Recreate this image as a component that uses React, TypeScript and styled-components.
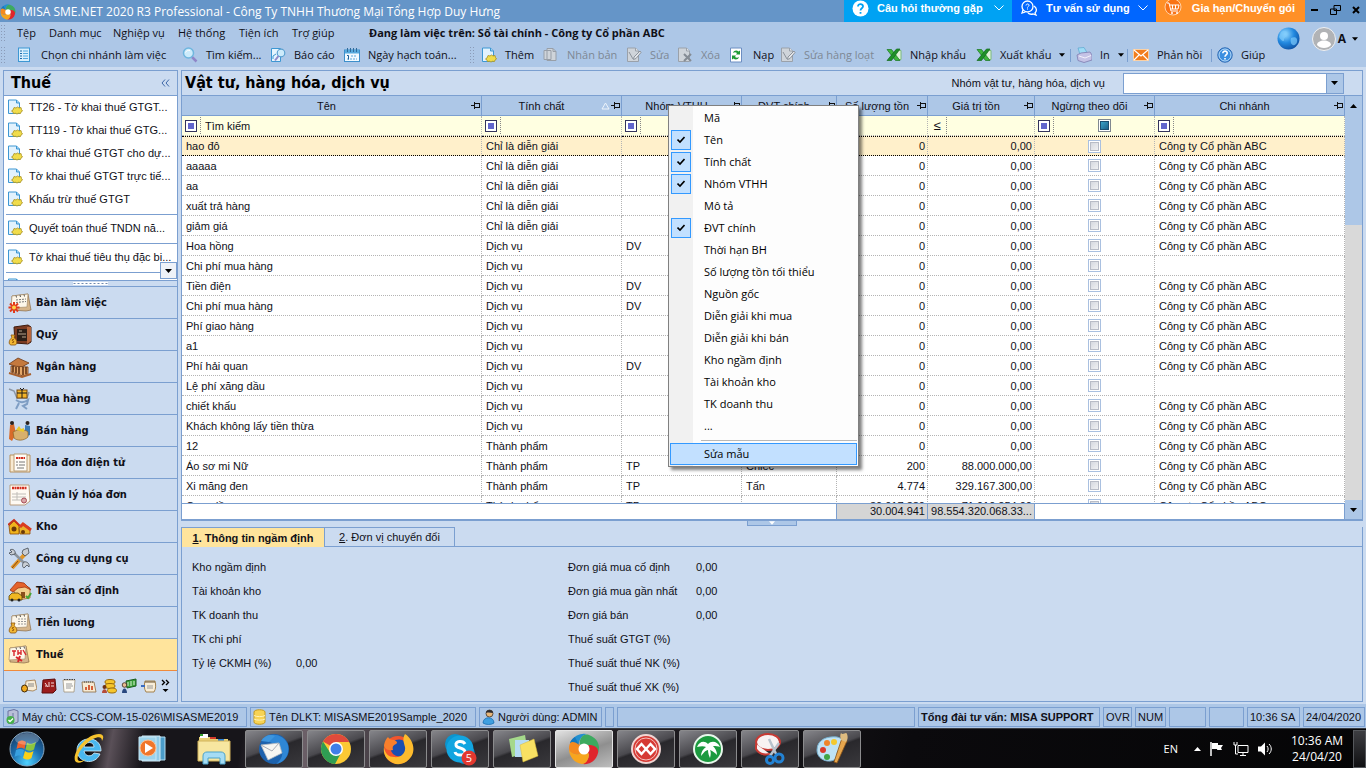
import React from "react";
import styled, { createGlobalStyle, css } from "styled-components";

const c = {
  title: "#6595c8",
  bar: "#adc7e7",
  panel: "#cbdbf0",
  line: "#7b9fd0",
  dot: "#b4b4b4",
  filter: "#ffffe1",
  selected: "#fff0cb",
  active: "#ffe49c",
  ink: "#101018",
};

const uiFont = `"Open Sans", "Noto Sans", sans-serif`;
const gridFont = `"Liberation Sans", Arial, sans-serif`;
const boldFont = `"DejaVu Sans Condensed", "DejaVu Sans", sans-serif`;

const GlobalStyle = createGlobalStyle`
  * { box-sizing: border-box; }
  body { margin: 0; background: ${c.bar}; color: ${c.ink}; font: 11px/16px ${gridFont}; }
  button, input, select { font: inherit; color: inherit; margin: 0; padding: 0; border: 0; background: none; border-radius: 0; }
  h1, h2, dl, dd, dt { margin: 0; }
  a { color: inherit; text-decoration: none; }
  svg { display: block; flex: none; }
`;

/* ---------- shell ---------- */

const Window = styled.div`
  position: relative;
  display: flex;
  flex-direction: column;
  height: 100vh;
  min-height: 700px;
  overflow: hidden;
`;

const TitleBar = styled.header`
  display: flex;
  height: 22px;
  background: ${c.title};
  color: #fff;
`;

const TitleText = styled.div`
  display: flex;
  align-items: center;
  flex: 1;
  gap: 6px;
  font: 12px/22px ${uiFont};
  padding-top: 1px;
  white-space: nowrap;
`;

const Promo = styled.button<{ $bg: string; $w: number; $center?: boolean }>`
  display: flex;
  align-items: center;
  gap: 8px;
  width: ${(p) => p.$w}px;
  height: 22px;
  padding: 0 8px 6px;
  background: ${(p) => p.$bg};
  color: #fff;
  font-weight: bold;
  white-space: nowrap;
  > span { flex: 1; text-align: ${(p) => (p.$center ? "center" : "left")}; }
`;

const WindowButtons = styled.div`
  display: flex;
  align-items: center;
  justify-content: space-around;
  width: 61px;
  padding-bottom: 2px;
`;

const Commands = styled.div`
  display: flex;
  height: 45px;
  background: ${c.bar};
  font: 11px/22px ${uiFont};
`;

const CommandRows = styled.div`
  flex: 1;
`;

const Row = styled.div`
  display: flex;
  align-items: center;
  height: 22px;
  white-space: nowrap;
`;

const Grip = styled.i<{ $gap: number }>`
  flex: none;
  width: 5px;
  height: 18px;
  margin-right: ${(p) => p.$gap}px;
  background: radial-gradient(#8a9bb8 1px, transparent 1px) 0 0 / 3px 3px;
`;

const MenuButton = styled.button<{ $w: number }>`
  width: ${(p) => p.$w}px;
  text-align: left;
`;

const Company = styled.strong`
  font-weight: 700;
`;

const ToolButton = styled.button<{ $w: number }>`
  display: flex;
  align-items: center;
  gap: 8px;
  flex: none;
  width: ${(p) => p.$w}px;
  height: 22px;
  white-space: nowrap;
  &:disabled { color: #7d8794; }
`;

const Divider = styled.i`
  flex: none;
  width: 1px;
  height: 13px;
  margin-right: 5px;
  background: ${c.line};
`;

const Account = styled.div`
  display: flex;
  align-items: flex-start;
  gap: 12px;
  padding: 5px 8px 0 0;
`;

const User = styled.button`
  display: flex;
  align-items: center;
  gap: 2px;
  font-weight: 700;
  font-size: 12px;
  svg:last-child { margin-left: 4px; }
`;

const Work = styled.div`
  display: flex;
  flex: 1;
  min-height: 0;
  gap: 3px;
  padding: 3px 3px 2px 3px;
  background: ${c.panel};
`;

/* ---------- side bar ---------- */

const Side = styled.aside`
  display: flex;
  flex-direction: column;
  flex: none;
  width: 175px;
  border: 1px solid ${c.line};
`;

const SideHead = styled.div`
  display: flex;
  align-items: center;
  justify-content: space-between;
  flex: none;
  height: 25px;
  padding: 0 7px;
  border-bottom: 1px solid ${c.line};
`;

const Heading = styled.h1`
  font: bold 16px/24px ${boldFont};
  color: #000;
  white-space: nowrap;
`;

const TaskList = styled.nav`
  position: relative;
  flex: 1;
  min-height: 0;
  overflow: hidden;
  background: #fff;
`;

const TaskLink = styled.a`
  display: flex;
  align-items: center;
  gap: 6px;
  height: 23px;
  padding: 0 3px 2px;
  white-space: nowrap;
`;

const Separator = styled.hr`
  height: 1px;
  margin: 3px 0 2px 2px;
  border: 0;
  background: ${c.line};
`;

const ScrollDown = styled.button`
  position: absolute;
  right: 0;
  bottom: 1px;
  display: grid;
  place-items: center;
  width: 17px;
  height: 17px;
  border: 1px solid ${c.line};
  background: #eef2f8;
`;

const SideSplit = styled.div`
  flex: none;
  height: 7px;
  border: solid ${c.line};
  border-width: 1px 0;
  background: radial-gradient(#6f89ae 1px, #fff 1px) center / 4px 3px;
  background-clip: content-box;
  padding: 1px 69px;
`;

const Module = styled.a<{ $on?: boolean }>`
  display: flex;
  align-items: center;
  flex: none;
  gap: 4px;
  height: 32px;
  padding: 0 4px;
  border-bottom: 1px solid ${(p) => (p.$on ? "#f08a3c" : c.line)};
  background: ${(p) => (p.$on ? c.active : c.panel)};
  font: bold 11px/16px ${boldFont};
`;

const Shortcuts = styled.div`
  display: flex;
  align-items: center;
  flex: none;
  gap: 4px;
  height: 30px;
  padding: 0 4px 0 17px;
`;

/* ---------- main ---------- */

const Main = styled.main`
  display: flex;
  flex-direction: column;
  flex: 1;
  min-width: 0;
`;

const GridPanel = styled.section`
  display: flex;
  flex-direction: column;
  flex: 1;
  min-height: 0;
  border: 1px solid ${c.line};
  border-bottom-width: 2px;
`;

const PanelHead = styled.div`
  display: flex;
  align-items: center;
  flex: none;
  height: 25px;
  padding: 0 18px 0 3px;
  border-bottom: 1px solid ${c.line};
  h1 { flex: 1; }
  label { margin-right: 18px; }
`;

const Select = styled.select`
  width: 221px;
  height: 21px;
  border: 1px solid ${c.line};
  appearance: none;
  background: linear-gradient(to right, #fff 202px, ${c.line} 202px 203px, ${c.bar} 203px);
`;

const SelectBox = styled.div`
  display: flex;
  align-items: center;
  svg { margin-left: -13px; margin-right: 6px; pointer-events: none; }
`;

const GridArea = styled.div`
  display: flex;
  flex: 1;
  min-height: 0;
`;

const GridColumn = styled.div`
  display: flex;
  flex-direction: column;
  flex: 1;
  min-width: 0;
`;

const GridClip = styled.div`
  flex: 1;
  min-height: 0;
  overflow: hidden;
  background: #fff;
`;

const Table = styled.table`
  width: 100%;
  table-layout: fixed;
  border-collapse: separate;
  border-spacing: 0;
  th, td { padding: 0; font-weight: normal; white-space: nowrap; overflow: hidden; }
`;

const HeadCell = styled.th`
  height: 20px;
  border: solid ${c.line};
  border-width: 0 1px 1px 0;
  background: ${c.bar};
  > div { display: flex; align-items: center; padding-right: 1px; }
  span { flex: 1; text-align: center; }
`;

const FilterCell = styled.td`
  height: 20px;
  border: dotted ${c.dot};
  border-width: 0 1px 1px 0;
  background: ${c.filter};
  > div { display: flex; align-items: center; height: 19px; }
  input[type="text"] { flex: 1; min-width: 0; width: 0; padding-left: 4px; }
  input[type="text"]::placeholder { color: ${c.ink}; opacity: 1; }
`;

const FilterOp = styled.button`
  display: grid;
  place-items: center;
  width: 19px;
  height: 17px;
  border-right: 1px dotted #888;
  font-size: 13px;
`;

const OpBox = styled.i`
  width: 12px;
  height: 12px;
  border: 1px solid #33335c;
  background: #6266cc;
  box-shadow: inset 0 0 0 2px #fff;
`;

const Cell = styled.td<{ $align?: string }>`
  height: 20px;
  border: dotted ${c.dot};
  border-width: 0 1px 1px 0;
  && { padding: 0 ${(p) => (p.$align === "right" ? 2 : 4)}px; }
  text-align: ${(p) => p.$align || "left"};
`;

const BodyRow = styled.tr<{ $on?: boolean }>`
  ${(p) =>
    p.$on &&
    css`
      td { background: ${c.selected}; border-top: 1px dotted #000; border-bottom: 1px dotted #000; }
    `}
`;

const Check = styled.input<{ $on?: boolean }>`
  display: block;
  appearance: none;
  width: 13px;
  height: 13px;
  && { margin: 0 auto; }
  border: 1px solid ${(p) => (p.$on ? "#808890" : "#a9c0e0")};
  box-shadow: inset 0 0 0 1px #fff, inset 0 0 0 2px ${(p) => (p.$on ? "#1d4f70" : "#b8bcc6")};
  background: ${(p) => (p.$on ? "linear-gradient(135deg,#43b4d8,#155079)" : "linear-gradient(135deg,#ced2da,#f8f8f8)")};
`;

const SumCell = styled.td<{ $on?: boolean; $edge?: boolean }>`
  height: 15px;
  line-height: 15px;
  text-align: right;
  background: ${(p) => (p.$on ? "#d5d5d5" : "#fff")};
  border-right: 1px solid ${(p) => (p.$on || p.$edge ? c.line : "transparent")};
  && { padding-right: 2px; }
`;

const SumRow = styled.div`
  flex: none;
  border-top: 1px solid ${c.line};
  background: #fff;
`;

const Scroll = styled.div`
  display: flex;
  flex-direction: column;
  width: 17px;
  flex: none;
  background: #d9d9d9;
`;

const ScrollArrow = styled.button`
  display: grid;
  place-items: center;
  flex: none;
  height: 19px;
  background: ${c.bar};
`;

const Thumb = styled.i`
  flex: none;
  height: 110px;
  margin-bottom: auto;
  background: ${c.bar};
`;

const SplitHandle = styled.button`
  display: grid;
  place-items: center;
  align-self: center;
  flex: none;
  width: 50px;
  height: 5px;
  margin-bottom: 1px;
  border: 1px solid ${c.line};
  border-top: 0;
  background: ${c.bar};
`;

const Details = styled.section`
  flex: none;
  border: 1px solid ${c.line};
  border-top: 0;
`;

const Tabs = styled.div`
  display: flex;
  height: 20px;
  &::after { content: ""; flex: 1; border-bottom: 1px solid ${c.line}; }
`;

const Tab = styled.button<{ $on?: boolean; $w: number }>`
  width: ${(p) => p.$w}px;
  border-top: 1px solid ${c.line};
  border-right: 1px solid ${c.line};
  ${(p) => (p.$on ? `background: ${c.active}; font-weight: bold;` : `border-bottom: 1px solid ${c.line};`)}
`;

const Fields = styled.div`
  display: grid;
  grid-template-columns: 376px 1fr;
  padding: 8px 10px 2px;
  dl { display: grid; grid-auto-rows: 24px; align-content: start; line-height: 24px; }
`;

const FieldList = styled.dl<{ $label: number }>`
  grid-template-columns: ${(p) => p.$label}px 1fr;
`;

/* ---------- context menu ---------- */

const Menu = styled.div`
  position: absolute;
  left: 668px;
  top: 105px;
  width: 191px;
  padding: 1px;
  border: 1px solid #808080;
  background: linear-gradient(to right, #f1f1f1 0 24px, #fdfdfd 24px);
  box-shadow: 3px 3px 3px rgba(0, 0, 0, 0.5);
  font: 11px/20px ${uiFont};
`;

const MenuItem = styled.button<{ $on?: boolean }>`
  display: flex;
  align-items: center;
  gap: 13px;
  width: 100%;
  height: 22px;
  padding-left: ${(p) => (p.$on ? 0 : 1)}px;
  color: #000;
  text-align: left;
  ${(p) => p.$on && `border: 1px solid #3399ff; background: #c2e0ff;`}
`;

const Tick = styled.i<{ $on?: boolean }>`
  display: grid;
  place-items: center;
  width: 20px;
  height: 20px;
  ${(p) => p.$on && `border: 1px solid #3399ff; background: #c2e0ff;`}
`;

const MenuLine = styled.hr`
  height: 1px;
  margin: 3px 0 2px 31px;
  border: 0;
  background: #b8b8b8;
`;

/* ---------- status bar and task bar ---------- */

const Status = styled.footer`
  display: flex;
  align-items: center;
  flex: none;
  gap: 3px;
  height: 24px;
  padding: 2px 1px 1px 3px;
  background: ${c.bar};
`;

const StatusCell = styled.div<{ $w?: number; $bold?: boolean }>`
  display: flex;
  align-items: center;
  gap: 3px;
  height: 20px;
  padding: 0 2px;
  ${(p) => (p.$w ? `flex: none; width: ${p.$w}px;` : "flex: 1;")}
  border: 1px solid ${c.line};
  font-weight: ${(p) => (p.$bold ? "bold" : "normal")};
  white-space: nowrap;
`;

const TaskBar = styled.footer`
  display: flex;
  align-items: center;
  flex: none;
  height: 40px;
  border-top: 1px solid #3a3d42;
  background: linear-gradient(100deg, #0a0a0c 0 90px, #5a5058 112px, #17151a 145px 240px, #6c6068 300px, #302c32 420px, #0b0a0d 900px, #050506);
  color: #fff;
  font: 11px/16px ${uiFont};
`;

const Pinned = styled.button`
  display: grid;
  place-items: center;
  width: 62px;
  height: 38px;
  &:first-child { width: 54px; margin-right: 5px; }
`;

const Running = styled.button<{ $on?: boolean }>`
  display: grid;
  place-items: center;
  width: 58px;
  height: 38px;
  margin-right: 4px;
  border: 1px solid ${(p) => (p.$on ? "#e4e4e4" : "#8b8b8d")};
  border-radius: 2px;
  background: ${(p) =>
    p.$on
      ? "linear-gradient(160deg,#e2e2e2,#8f8f8f 55%,#bdbdbd)"
      : "linear-gradient(160deg,#85858a,#4a494e 45%,#29282c 50%,#3a393d)"};
`;

const Tray = styled.div`
  display: flex;
  align-items: center;
  gap: 8px;
  margin-left: auto;
`;

const Language = styled.span`
  margin-right: 8px;
`;

const Clock = styled.time`
  width: 72px;
  font-size: 12px;
  text-align: center;
`;

const ShowDesktop = styled.button`
  width: 13px;
  height: 38px;
  border: 1px solid #55585c;
  background: linear-gradient(#3d3e42, #101012);
`;

/* ---------- icons ---------- */

const Caret = ({ up, s = 7, fill = "#000" }: { up?: boolean; s?: number; fill?: string }) => (
  <svg width={s} height="4" viewBox="0 0 7 4"><path d={up ? "M0 4h7L3.500 0z" : "M0 0h7L3.500 4z"} fill={fill} /></svg>
);

const Pinwheel = ({ s }: { s: number }) => (
  <svg width={s} height={s} viewBox="0 0 32 32">
    <path d="M16 16L2 10A15 15 0 0 1 19 1C13 3 11 7 11 12z" fill="#2390cf" />
    <path d="M16 16l-4-5C11 5 16 0 21 2c8 3 12 10 9 18-1-5-5-8-10-8z" fill="#3daa5f" />
    <path d="M16 16l5-4c6 0 10 3 9 8-2 8-8 12-16 11 4-1 7-5 7-10z" fill="#e0252c" />
    <path d="M16 16l5 5c0 5-3 10-7 10C6 30 1 23 1 16c2 4 6 6 10 5z" fill="#f7a51f" />
    <path d="M16 16l-5 5c-5 1-10-2-10-6 0-3 1-5 2-6 2-2 5-1 8 2z" fill="#f58a1f" />
    <path d="M11 12C8 9 4 8 2 10c1-3 3-5 5-6z" fill="#1578be" />
    <circle cx="16" cy="16" r="5.500" fill="#fff" />
  </svg>
);

const Doc = ({ children, gray }: { children?: React.ReactNode; gray?: boolean }) => (
  <svg width="16" height="16" viewBox="0 0 16 16">
    <path d="M1.500 1h8l3 3v10.500h-11z" fill={gray ? "#cfd4da" : "#e2f2fd"} stroke={gray ? "#9aa1aa" : "#3d97d3"} />
    <path d="M9.500 1v3h3" fill={gray ? "#e4e6ea" : "#9fd0f2"} stroke={gray ? "#9aa1aa" : "#3d97d3"} />
    {children}
  </svg>
);

const Flower = () => (
  <path d="M7 8.500l2 .500 1.500-1 1.500 1 2-.500.500 2 1 1.500-1.500 1-.500 1.500-2-.200-1.500.700-1.500-.700-2 .200-.500-1.500-1.500-1 1.500-1z" fill="#f0dc4b" stroke="#a8901f" strokeWidth=".8" />
);

const NewDoc = () => <Doc><Flower /></Doc>;

const Excel = () => (
  <svg width="16" height="16" viewBox="0 0 16 16">
    <path d="M9 3.500h6v9H9" fill="#dff2da" stroke="#7dbb7d" />
    <path d="M1 2.500h4.500l8.500 11H9.500z" fill="#3fb53f" stroke="#17751d" strokeWidth=".7" />
    <path d="M14 2h-3.500L1 13.500h4.500z" fill="#1f8f2a" stroke="#136a1b" strokeWidth=".7" />
  </svg>
);

const ToolIcon = ({ name }: { name: string }) => {
  switch (name) {
    case "list":
      return (
        <svg width="16" height="16" viewBox="0 0 16 16">
          <rect x="1.500" y="1" width="11" height="13.500" fill="#d8effd" stroke="#3d97d3" />
          <path d="M3 4h2M3 6.500h2M3 9h2M3 11.500h2" stroke="#1c6aa8" />
          <path d="M6 4h5M6 6.500h5M6 9h5M6 11.500h5" stroke="#52a8de" />
        </svg>
      );
    case "search":
      return (
        <svg width="16" height="16" viewBox="0 0 16 16">
          <path d="M10 10l4.500 4.500" stroke="#8f86c8" strokeWidth="2.500" />
          <circle cx="6.500" cy="6" r="5" fill="#cdebfb" stroke="#6fb6de" strokeWidth="1.500" />
          <path d="M3.500 5.500c1-2 3-2.500 4.500-2" stroke="#fff" fill="none" />
        </svg>
      );
    case "report":
      return (
        <svg width="16" height="16" viewBox="0 0 16 16">
          <path d="M1.500 1.500h9v13h-9z" fill="#e6f5fe" stroke="#3d97d3" />
          <path d="M3 12V9l3-2" stroke="#3d97d3" fill="none" />
          <circle cx="11" cy="6" r="3.800" fill="#cdebfb" stroke="#5a9fd0" strokeWidth="1.200" />
          <path d="M8.500 9L5 13.500" stroke="#8f86c8" strokeWidth="2" />
        </svg>
      );
    case "calendar":
      return (
        <svg width="16" height="16" viewBox="0 0 16 16">
          <rect x=".5" y="3" width="15" height="11.500" fill="#f2faff" stroke="#3d8fcb" />
          <rect x="1" y="3" width="14" height="3.500" fill="#56aade" />
          <path d="M3.500 1v4M6.500 1v4M9.500 1v4M12.500 1v4" stroke="#2f6c9c" />
          <path d="M7 9h6M3 12h10" stroke="#5aa8dc" strokeDasharray="2 1" />
          <path d="M3 8.500h1.500v4" stroke="#1f5f98" fill="none" />
        </svg>
      );
    case "copy":
      return (
        <svg width="16" height="16" viewBox="0 0 16 16">
          <path d="M1 3.500h7v9H1zM4 1.500h6l3 3v9H4z" fill="#cfd4da" stroke="#989fa8" />
          <path d="M10 1.500v3h3" fill="none" stroke="#989fa8" />
        </svg>
      );
    case "edit":
      return <Doc gray><path d="M3 5l4 7M14 4l-6 6-.500 2.500 2.500-1 5-6z" fill="#e4e6ea" stroke="#8c939c" /></Doc>;
    case "delete":
      return <Doc gray><path d="M7 7l7 7M14 7l-7 7" stroke="#858c95" strokeWidth="2" /></Doc>;
    case "reload":
      return (
        <svg width="16" height="16" viewBox="0 0 16 16">
          <path d="M1.500 1h11v14h-11z" fill="#fff" stroke="#6d8ec2" />
          <path d="M4 6c1-3 4-3 5.500-1.500L11 3.500v4H7l1-1.500c-1.500-1-2.500-1-4 0zM10 10c-1 3-4 3-5.500 1.500L3 12.500v-4h4L6 10c1.500 1 2.500 1 4 0z" fill="#1d9a35" />
        </svg>
      );
    case "excel":
      return <Excel />;
    case "print":
      return (
        <svg width="16" height="16" viewBox="0 0 16 16">
          <path d="M2 1l6-.500 3 5-7 2z" fill="#9fdcf6" stroke="#5ba7cf" strokeWidth=".7" />
          <path d="M1 8l4-2 9-1 2 3v5l-8 2.500-6-2z" fill="#c5c3e6" stroke="#7f7cb0" strokeWidth=".8" />
          <path d="M3 9l6 2 6-2.500" fill="none" stroke="#f2f1fb" />
        </svg>
      );
    case "mail":
      return (
        <svg width="16" height="16" viewBox="0 0 16 16">
          <rect x=".5" y="2.500" width="15" height="11" fill="#f27d1d" stroke="#fbd0a4" />
          <path d="M1 3l7 6 7-6M1 13l5-5M15 13l-5-5" fill="none" stroke="#fff" strokeWidth="1.200" />
        </svg>
      );
    case "help":
      return (
        <svg width="16" height="16" viewBox="0 0 16 16">
          <circle cx="8" cy="8" r="7.200" fill="#3b8fe0" stroke="#2a66b0" />
          <circle cx="8" cy="8" r="6" fill="none" stroke="#b9dbf8" />
          <path d="M5.800 6.300c0-3 4.600-2.800 4.400 0C10 8 8 8 8 9.800M8 11v1.500" fill="none" stroke="#fff" strokeWidth="1.600" />
        </svg>
      );
    default:
      return <NewDoc />;
  }
};

const PinIcon = () => (
  <svg width="9" height="7" viewBox="0 0 9 7" shapeRendering="crispEdges"><path d="M0 3.500h3M3.500 0v7M4 1.500h4.500v4M4 5h5" stroke="#111" fill="none" /></svg>
);

const Bag = ({ x = 0, y = 12 }: { x?: number; y?: number }) => (
  <g transform={`translate(${x} ${y})`}>
    <path d="M3 0h4L6 2.500c3 2 4 7 1 7.500H3C0 9.500 1 4.500 4 2.500z" fill="#f2b733" stroke="#8a5410" strokeWidth=".8" />
    <path d="M6 4.500c-2-.500-2.500 1-1 1.500s1 2-1 1.500" stroke="#7a3c00" fill="none" strokeWidth=".8" />
  </g>
);

const Paper = ({ x = 4 }: { x?: number }) => (
  <>
    <path d={`M${x} 5l16-2 3 16-5 1-14-1z`} fill="#d6b58a" stroke="#8a6a45" strokeWidth=".7" />
    <path d={`M${x} 5l16-2-1 13-16 1z`} fill="#fdf7ea" stroke="#a98f6c" strokeWidth=".7" />
    <path d="M8 4.500l.5 2M12 4l.5 2M16 3.500l.5 2" stroke="#555" />
  </>
);

const ModuleIcon = ({ name }: { name: string }) => {
  const art: Record<string, React.ReactNode> = {
    desk: (<><Paper /><path d="M8 9l10-1M8 11.500l10-1" stroke="#777" strokeDasharray="2 1" /><path d="M6 11v11M.500 16.500h11M2 12.500l8 8M10 12.500l-8 8" stroke="#e23a1b" strokeWidth="2" /><circle cx="6" cy="16.500" r="2" fill="#ffd34a" /></>),
    fund: (<><path d="M6 4l14-2 3 2v15l-3 2-13-1z" fill="#7a3b22" stroke="#3f1c0e" /><path d="M9 6h10v12H9z" fill="#2c1e17" /><path d="M19 4l4 0v14l-4 3z" fill="#b5653c" /><path d="M10 11h8M11 8h3M14 14h4" stroke="#b8a48d" /><Bag /></>),
    bank: (<><path d="M1 9l9-6 11 5-9 5z" fill="#c4793e" stroke="#6e3916" strokeWidth=".8" /><path d="M3 11l17 1v7l-5 2L3 17z" fill="#e5a869" stroke="#6e3916" strokeWidth=".8" /><path d="M5 11v6M8 12v6M11 12v7M15 12v8M18 12v7" stroke="#5b2c10" strokeWidth="1.500" /><path d="M1 18l13 4 9-3" stroke="#a8602d" strokeWidth="2" fill="none" /></>),
    buy: (<><path d="M1 2l5 2 3 7h10l2-6" fill="none" stroke="#8c97a6" strokeWidth="1.500" /><rect x="9" y="3" width="10" height="8" fill="#f4b42a" stroke="#7b4a0c" /><path d="M14 3v8M9 6h10M12 1l2 2 2-2" stroke="#1d1d1d" fill="none" /><path d="M8 13c4 3 8 3 12 0l-1 4-4 2 4 3M11 16l-3 6" fill="none" stroke="#7f9ec4" strokeWidth="2" /></>),
    sell: (<><path d="M2 6l4-1 2 10-4 7-3-2z" fill="#d96b2a" /><path d="M17 6l5 1v9l-5 2z" fill="#3a79b5" /><circle cx="4" cy="4" r="2" fill="#2a211d" /><circle cx="19.500" cy="4" r="2" fill="#2a211d" /><path d="M5 13c5-3 12-3 15 0v5c-4 4-11 4-14 1z" fill="#d8b06d" stroke="#8d6325" strokeWidth=".7" /><path d="M8 11l3-4 2 3 3-1v4z" fill="#e9c92c" /></>),
    einvoice: (<><path d="M2 4h20v17H2z" fill="#f8ead2" stroke="#b7905c" /><path d="M6 3h13v17H6z" fill="#fffdf8" stroke="#b79c77" /><path d="M8 7h9" stroke="#d32e20" strokeWidth="2" strokeDasharray="2 .5" /><path d="M8 11h2M8 14h2M11 11h6M11 14h6M9 17h7" stroke="#777" /></>),
    invoice: (<><path d="M2 2h19l1 16-5 4H2z" fill="#fffaf3" stroke="#b99c7c" /><path d="M4 5h15" stroke="#d32e20" strokeWidth="2.500" strokeDasharray="2 .5" /><path d="M4 11h14M4 14h14M4 17h9M9 9v8" stroke="#c0bdb8" /><circle cx="16" cy="17.500" r="2.500" fill="#d9a6a8" stroke="#a74c56" /></>),
    stock: (<><path d="M1 11l5-5 5 5v8H2z" fill="#f0b31b" stroke="#8d4d08" strokeWidth=".8" /><path d="M0 10l6-5 6 6" fill="none" stroke="#c5321b" strokeWidth="2" /><path d="M11 13l5-4 6 4v6H12z" fill="#eab22a" stroke="#8d4d08" strokeWidth=".8" /><path d="M12 12l3-3 8 6" fill="none" stroke="#da3c20" strokeWidth="3" /><circle cx="6" cy="14" r="2.500" fill="#6c3908" /><circle cx="15" cy="17" r="2" fill="#6c3908" /></>),
    tools: (<><path d="M4 21L18 6" stroke="#e0962a" strokeWidth="4" /><path d="M4 21l6-7" stroke="#894810" /><path d="M4 4l14 14" stroke="#8c949c" strokeWidth="2.500" /><path d="M16 15c3-1 6 2 5 5l-2-2-3 3c-2-1-2-4 0-6zM2 3c3-2 6 1 5 4L3 8 1 6l3-1zM15 3l5-2 1 5-4 3-3-3z" fill="#c9ced4" stroke="#444b54" strokeWidth=".8" /></>),
    asset: (<><path d="M5 10l8-6 9 5v10l-12 2z" fill="#f3cf8b" stroke="#a6672b" strokeWidth=".8" /><path d="M2 11l7-8 7 1 7 7-6-3-7 1-5 4z" fill="#e4632b" stroke="#a23410" strokeWidth=".8" /><path d="M13 13h4v6h-4z" fill="#8c4f1d" /><path d="M1 17l3-3h6l4 3v4H1z" fill="#f0b721" stroke="#5c410a" strokeWidth=".8" /><circle cx="4" cy="21" r="1.500" fill="#222" /><circle cx="11" cy="21" r="1.500" fill="#222" /><path d="M18 17l2 2 3-5" stroke="#47a536" strokeWidth="2" fill="none" /></>),
    salary: (<><Paper /><path d="M10 8h8M10 10.500h8M10 13h8" stroke="#999" strokeDasharray="2 1" /><Bag /></>),
    tax: (<><Paper x={2} /><path d="M4 8h4M6 8v5M10 7v5M13 7v5M10 10h3M15 7l3 5" stroke="#d8262b" strokeWidth="1.400" /><path d="M8 14l6 4M12 13l-2 6" stroke="#d8262b" strokeWidth="2" /></>),
  };
  return <svg width="24" height="24" viewBox="0 0 24 24">{art[name]}</svg>;
};

const ShortcutIcon = ({ name }: { name: string }) => {
  const art: Record<string, React.ReactNode> = {
    bee: (<><path d="M5 3l9-1 2 9-4 2-8-1z" fill="#f8ecd6" stroke="#9a7444" strokeWidth=".8" /><path d="M7 6h6M7 8h6" stroke="#888" /><ellipse cx="3.500" cy="10.500" rx="3" ry="3.500" fill="#f0a91e" stroke="#3b2405" /></>),
    book: (<><path d="M2 2l12-1 1 11-3 3H1z" fill="#9c1d1d" stroke="#5e0c0c" /><path d="M4 5l3 4M8 4v5M10 5h3M10 8h3M4 8h2" stroke="#f5dede" /></>),
    slip: (<><path d="M2 2h12l-1 12H3z" fill="#fdfbf4" stroke="#a0937c" strokeWidth=".8" /><path d="M3 1.500h11" stroke="#444" strokeDasharray="1.500 1" /><path d="M5 6h6M5 8h7M5 10h5" stroke="#9a9a9a" /></>),
    chart: (<><path d="M1 4h12l2 10H2z" fill="#f6ead3" stroke="#8b6a3f" strokeWidth=".8" /><path d="M3 4h9" stroke="#444" strokeDasharray="1 1" /><path d="M5 12V9M8 12V7M11 12V8" stroke="#d2522b" strokeWidth="1.800" /></>),
    coins: (<><ellipse cx="9" cy="4" rx="5" ry="2.500" fill="#f6c62c" stroke="#9b6c09" /><ellipse cx="9" cy="8" rx="5" ry="2.500" fill="#f6c62c" stroke="#9b6c09" /><ellipse cx="11" cy="12.500" rx="4.500" ry="2.500" fill="#f6c62c" stroke="#9b6c09" /><circle cx="3.500" cy="9" r="2" fill="#6e3317" /><path d="M1 15c0-5 5-5 5 0z" fill="#b54c3a" /></>),
    agent: (<><path d="M5 3l10-2v7l-9 2z" fill="#3ca03a" stroke="#1a5d1e" /><path d="M7 4v4M10 3v5M13 3v4" stroke="#d9f3d4" /><circle cx="3.500" cy="7" r="2.300" fill="#e8bd92" stroke="#3a2517" strokeWidth=".8" /><path d="M1 15c0-6 5-6 5 0z" fill="#28477e" /></>),
    scroll: (<><path d="M4 3h10c1 4 1 8-1 11H5c-2-3-2-7-1-11z" fill="#f8edd8" stroke="#a3824e" /><path d="M4 4h10" stroke="#6b5433" /><path d="M6 8h6M6 10h6" stroke="#999" /><path d="M0 8h4" stroke="#3c6cc0" strokeWidth="2" /></>),
  };
  return <svg width="16" height="16" viewBox="0 0 16 16">{art[name]}</svg>;
};

const AppIcon = ({ name }: { name: string }) => {
  const art: Record<string, React.ReactNode> = {
    start: (<><defs><radialGradient id="orb" cx=".5" cy=".9" r=".9"><stop offset="0" stopColor="#4fd2ff" /><stop offset=".5" stopColor="#1c6fb0" /><stop offset="1" stopColor="#16375e" /></radialGradient></defs><circle cx="18" cy="18" r="17" fill="url(#orb)" stroke="#88a9c4" /><path d="M9 11c3-2 5-2 8 0l-1.500 7c-3-2-5-1.500-8 0z" fill="#f0622d" /><path d="M18 11.500c3 2 5 1.500 9-.5l-2 7.500c-3 2-5 1.500-8.500 0z" fill="#8cc63f" /><path d="M7 19c3-1.500 5-1.500 8 0l-2 7c-2-2-4-2-7.500 0z" fill="#38a0e0" /><path d="M16 20c3 2 5 2 8.500 0l-2 7c-3 2-5 2-8.500 0z" fill="#fcd116" /><ellipse cx="18" cy="8" rx="12" ry="6" fill="#fff" opacity=".25" /></>),
    ie: (<><path d="M29 20H12c1 6 8 6 10 2l6 1C23 35 5 32 5 19 5 5 29 3 29 20zM12 16h10c0-6-9-6-10 0z" fill="#4ab8ef" stroke="#d6f1ff" strokeWidth=".8" /><path d="M4 31C-2 25 13 3 27 3c5 0 5 4 3 7 0-4-3-5-9-2C10 14 4 25 6 29c1 2 5 1 8-1-3 3-7 5-10 3z" fill="#f6c22d" /></>),
    media: (<><path d="M14 6h17v23H14z" fill="#4b9cc9" stroke="#b4dcf0" /><path d="M8 5h18v25H8z" fill="#8fcbe8" stroke="#d5edf8" /><path d="M5 6h17v23H5z" fill="#9bd3ec" stroke="#c8e7f5" /><circle cx="14" cy="17" r="8" fill="#f0762a" stroke="#f9c397" /><path d="M11 12l8 5-8 5z" fill="#fff" /></>),
    explorer: (<><path d="M3 6h11l2 2h16v22H3z" fill="#e9cf74" /><path d="M4 3h8v4H4z" fill="#fff" /><path d="M4 3h3v2H4z" fill="#35a02c" /><path d="M14 6h6v2h-6z" fill="#d43b2a" /><path d="M22 8h6v2h-6z" fill="#2c7fd4" /><path d="M2 10h32v20H2z" fill="#f7e6a0" stroke="#d1b25a" /><path d="M7 33v-8c0-3 2-4 4-4h14c2 0 4 1 4 4v8h-5v-6H12v6z" fill="#a5dcf4" stroke="#4da3ca" /></>),
    bird: (<><circle cx="18" cy="18" r="15" fill="#1d62ad" /><path d="M8 8c5-7 20-6 24 6 2 10-4 18-12 19 8-6 8-14 2-18z" fill="#2f87d6" /><path d="M5 14l18-2 3 10-14 7z" fill="#f6f6f2" stroke="#b8bcc2" strokeWidth=".8" /><path d="M5 14l11 6 7-8" fill="none" stroke="#a8acb4" /><path d="M5 10c4-6 9-7 14-5l-6 6z" fill="#3d95de" /></>),
    chrome: (<><circle cx="18" cy="18" r="15" fill="#fcc934" /><path d="M18 18L5 10.500a15 15 0 0 1 26 0L31 11H18z" fill="#e04a3b" /><path d="M5 10.500A15 15 0 0 0 17 33l6-11-10 1z" fill="#2f9e53" /><circle cx="18" cy="18" r="7" fill="#fff" /><circle cx="18" cy="18" r="5.500" fill="#3f7ee8" /></>),
    firefox: (<><circle cx="18" cy="19" r="14" fill="#f3552d" /><circle cx="19" cy="17" r="8.500" fill="#1b4fb0" /><path d="M25 3c8 5 11 16 6 23-4 6-12 9-18 6-7-3-10-9-9-16 1 7 5 10 10 10 7 1 12-4 11-10-1-4-3-8 0-13z" fill="#fdbb2d" /><path d="M4 14c1-4 2-6 4-8 1 2 3 3 6 3 3 1 4 3 2 4-3 1-4 3-3 6-6 1-9-2-9-5z" fill="#fa7f2b" /></>),
    skype: (<><circle cx="13" cy="13" r="10" fill="#0b95cf" /><circle cx="23" cy="23" r="10" fill="#0b95cf" /><circle cx="18" cy="18" r="13.500" fill="#12a5e0" /><path d="M23 13c-2-4-10-3-9 1 0 4 9 2 9 7 0 4-9 4-10 0" fill="none" stroke="#fff" strokeWidth="3" /><circle cx="27" cy="27" r="7.500" fill="#e2382f" /></>),
    notes: (<><path d="M5 8l16-4 3 18-16 4z" fill="#a5d88b" /><path d="M11 9h14v17H11z" fill="#b6dcf3" /><path d="M16 14l14-6 4 17-15 6z" fill="#f8e163" stroke="#d8ba3a" strokeWidth=".5" /></>),
    red: (<><circle cx="18" cy="18" r="14" fill="#d63a34" stroke="#f0d5d3" strokeWidth="2" /><circle cx="18" cy="18" r="11" fill="none" stroke="#f4c1bd" /><path d="M9 18l4.500-5 9 10 4.500-5-4.500-5-9 10z" fill="none" stroke="#fff" strokeWidth="2.500" /></>),
    green: (<><circle cx="18" cy="18" r="14" fill="#1b9a3e" stroke="#e8f8ec" strokeWidth="2" /><path d="M18 13c-4-4-9-2-11 3 4-1 7-1 9 0-3 2-5 5-5 9 3-4 5-6 7-6 0 3 1 6 2 8 1-4 1-6 0-8 3 1 5 3 7 5 0-4-2-7-4-9 3 0 5 0 7 1-2-5-8-7-12-3z" fill="#fff" /></>),
    snip: (<><ellipse cx="16" cy="11" rx="12" ry="8" fill="#f8f2f2" stroke="#c73a34" strokeWidth="2" /><path d="M4 13v5c3 5 9 6 14 5" fill="#f8f2f2" stroke="#c73a34" strokeWidth="2" /><path d="M17 8l8 17M27 12l-9 13" stroke="#b8c2cc" strokeWidth="2.500" /><circle cx="27" cy="27" r="4" fill="none" stroke="#2382d3" strokeWidth="3" /><circle cx="18" cy="29" r="3.500" fill="none" stroke="#2382d3" strokeWidth="3" /></>),
    paint: (<><path d="M3 19C3 8 14 5 23 6c9 2 8 11 3 13-3 1-3 3-3 6-1 8-20 7-20-6z" fill="#bfe2f4" stroke="#77b1d0" /><circle cx="9" cy="19" r="3" fill="#d93a2c" /><circle cx="13" cy="12" r="3" fill="#f0842a" /><circle cx="20" cy="11" r="3" fill="#f4c92e" /><circle cx="13" cy="26" r="3" fill="#3fa445" /><path d="M30 3l3 7-10 22-3-1 7-21z" fill="#e7a64d" stroke="#8a5317" strokeWidth=".8" /><path d="M27 2c2 3 5-2 6 1s1 5-1 8l-5-2c-1-3-1-5 0-7z" fill="#ddbb80" /></>),
  };
  return <svg width="36" height="36" viewBox="0 0 36 36">{art[name]}</svg>;
};

const Badge = styled.span`
  grid-area: 1 / 1;
  align-self: end;
  justify-self: end;
  margin: 0 6px 1px 0;
`;

const Stack = styled.div`
  display: grid;
  > svg { grid-area: 1 / 1; }
`;

/* ---------- data ---------- */

const menus: [string, number][] = [["Tệp", 32], ["Danh mục", 64], ["Nghiệp vụ", 65], ["Hệ thống", 61], ["Tiện ích", 53], ["Trợ giúp", 77]];

type Tool = { icon: string; text: string; w: number; off?: boolean; caret?: boolean; lineAfter?: boolean; gripAfter?: boolean };
const tools: Tool[] = [
  { icon: "list", text: "Chọn chi nhánh làm việc", w: 165 },
  { icon: "search", text: "Tìm kiếm...", w: 88 },
  { icon: "report", text: "Báo cáo", w: 74 },
  { icon: "calendar", text: "Ngày hạch toán...", w: 125, gripAfter: true },
  { icon: "new", text: "Thêm", w: 62 },
  { icon: "copy", text: "Nhân bản", w: 83, off: true },
  { icon: "edit", text: "Sửa", w: 51, off: true },
  { icon: "delete", text: "Xóa", w: 52, off: true },
  { icon: "reload", text: "Nạp", w: 51 },
  { icon: "edit", text: "Sửa hàng loạt", w: 106, off: true },
  { icon: "excel", text: "Nhập khẩu", w: 90 },
  { icon: "excel", text: "Xuất khẩu", w: 94, caret: true, lineAfter: true },
  { icon: "print", text: "In", w: 51, caret: true, lineAfter: true },
  { icon: "mail", text: "Phản hồi", w: 78, lineAfter: true },
  { icon: "help", text: "Giúp", w: 50 },
];

const tasks = [
  "TT26 - Tờ khai thuế GTGT...", "TT119 - Tờ khai thuế GTG...", "Tờ khai thuế GTGT cho dự...", "Tờ khai thuế GTGT trực tiế...",
  "Khấu trừ thuế GTGT", "-", "Quyết toán thuế TNDN nă...", "-", "Tờ khai thuế tiêu thụ đặc bi...", "-", "",
];

const modules: [string, string][] = [
  ["desk", "Bàn làm việc"], ["fund", "Quỹ"], ["bank", "Ngân hàng"], ["buy", "Mua hàng"], ["sell", "Bán hàng"],
  ["einvoice", "Hóa đơn điện tử"], ["invoice", "Quản lý hóa đơn"], ["stock", "Kho"], ["tools", "Công cụ dụng cụ"],
  ["asset", "Tài sản cố định"], ["salary", "Tiền lương"], ["tax", "Thuế"],
];

const columns: { text: string; w?: number; op: string }[] = [
  { text: "Tên", op: "box" },
  { text: "Tính chất", w: 140, op: "box" },
  { text: "Nhóm VTHH", w: 120, op: "box" },
  { text: "ĐVT chính", w: 95, op: "box" },
  { text: "Số lượng tồn", w: 91, op: "≤" },
  { text: "Giá trị tồn", w: 107, op: "≤" },
  { text: "Ngừng theo dõi", w: 120, op: "box" },
  { text: "Chi nhánh", w: 190, op: "box" },
];

const abc = "Công ty Cổ phần ABC";
const dg = "Chỉ là diễn giải";
const dv = "Dịch vụ";
const tp = "Thành phẩm";
const rows: string[][] = [
  ["hao đô", dg, "", "", "0", "0,00", abc],
  ["aaaaa", dg, "", "", "0", "0,00", abc],
  ["aa", dg, "", "", "0", "0,00", abc],
  ["xuất trả hàng", dg, "", "", "0", "0,00", abc],
  ["giảm giá", dg, "", "", "0", "0,00", abc],
  ["Hoa hồng", dv, "DV", "", "0", "0,00", abc],
  ["Chi phí mua hàng", dv, "", "", "0", "0,00", ""],
  ["Tiền điện", dv, "DV", "", "0", "0,00", abc],
  ["Chi phí mua hàng", dv, "DV", "", "0", "0,00", abc],
  ["Phí giao hàng", dv, "", "", "0", "0,00", abc],
  ["a1", dv, "", "", "0", "0,00", abc],
  ["Phí hải quan", dv, "DV", "", "0", "0,00", abc],
  ["Lệ phí xăng dầu", dv, "", "", "0", "0,00", ""],
  ["chiết khấu", dv, "", "", "0", "0,00", abc],
  ["Khách không lấy tiền thừa", dv, "", "", "0", "0,00", abc],
  ["12", tp, "", "", "0", "0,00", abc],
  ["Áo sơ mi Nữ", tp, "TP", "Chiếc", "200", "88.000.000,00", abc],
  ["Xi măng đen", tp, "TP", "Tấn", "4.774", "329.167.300,00", abc],
  ["Cam dầu", tp, "TP", "", "30.017.380", "71.910.254,00", abc],
];

const menuItems: [string, boolean][] = [
  ["Mã", false], ["Tên", true], ["Tính chất", true], ["Nhóm VTHH", true], ["Mô tả", false], ["ĐVT chính", true],
  ["Thời hạn BH", false], ["Số lượng tồn tối thiểu", false], ["Nguồn gốc", false], ["Diễn giải khi mua", false],
  ["Diễn giải khi bán", false], ["Kho ngầm định", false], ["Tài khoản kho", false], ["TK doanh thu", false], ["...", false],
];

const leftFields = [["Kho ngầm định", ""], ["Tài khoản kho", ""], ["TK doanh thu", ""], ["TK chi phí", ""], ["Tỷ lệ CKMH (%)", "0,00"]];
const rightFields = [
  ["Đơn giá mua cố định", "0,00"], ["Đơn giá mua gần nhất", "0,00"], ["Đơn giá bán", "0,00"],
  ["Thuế suất GTGT (%)", ""], ["Thuế suất thuế NK (%)", ""], ["Thuế suất thuế XK (%)", ""],
];

const Cols = () => (
  <colgroup>{columns.map((k) => <col key={k.text} width={k.w} />)}</colgroup>
);

const Chevron = () => (
  <svg width="10" height="6" viewBox="0 0 10 6"><path d="M.5.500L5 5l4.500-4.500" fill="none" stroke="#fff" /></svg>
);

const FieldGroup = ({ items, label }: { items: string[][]; label: number }) => (
  <FieldList $label={label}>
    {items.map(([k, v]) => <React.Fragment key={k}><dt>{k}</dt><dd>{v}</dd></React.Fragment>)}
  </FieldList>
);

export default function App() {
  return (
    <Window>
      <GlobalStyle />
      <TitleBar>
        <TitleText><Pinwheel s={16} />MISA SME.NET 2020 R3 Professional - Công Ty TNHH Thương Mại Tổng Hợp Duy Hưng</TitleText>
        <Promo $bg="#00a2f3" $w={168}>
          <svg width="17" height="17" viewBox="0 0 17 17"><circle cx="8.500" cy="8.500" r="8" fill="#fff" /><path d="M6 6.500c0-3.500 5.200-3 5 0-.2 1.800-2.500 1.800-2.500 4M8.500 12v1.800" fill="none" stroke="#00a2f3" strokeWidth="1.800" /></svg>
          <span>Câu hỏi thường gặp</span><Chevron />
        </Promo>
        <Promo $bg="#0066ff" $w={144}>
          <svg width="18" height="16" viewBox="0 0 18 16"><circle cx="7.500" cy="6.500" r="5.500" fill="none" stroke="#fff" strokeWidth="1.300" /><path d="M3 10l-1 3 3.500-1M14 6c3 2 3 5 1 7l1 2-3-1c-2 .500-4 0-5-1" fill="none" stroke="#fff" strokeWidth="1.300" /><path d="M6 5.500c0-2 3.200-2 3 0-.1 1-1.500 1-1.500 2M7.500 8.500v1" fill="none" stroke="#fff" /></svg>
          <span>Tư vấn sử dụng</span><Chevron />
        </Promo>
        <Promo $bg="#ff9027" $w={149} $center>
          <svg width="18" height="18" viewBox="0 0 18 18"><circle cx="9" cy="8" r="8" fill="#f97316" stroke="#ffd2a8" /><path d="M3 4h2l2 8h7M5.500 6H15l-1 4H6.500M8.500 6v4M11.500 6v4" fill="none" stroke="#fff" /><circle cx="8" cy="14" r="1" fill="#fff" /><circle cx="13" cy="14" r="1" fill="#fff" /></svg>
          <span>Gia hạn/Chuyển gói</span>
        </Promo>
        <WindowButtons>
          <button aria-label="Thu nhỏ"><svg width="8" height="10" viewBox="0 0 8 10"><path d="M0 5h7" stroke="#000" strokeWidth="2" /></svg></button>
          <button aria-label="Khôi phục"><svg width="11" height="10" viewBox="0 0 11 10"><path d="M4 .5h6.500v5H4zM.5 4h6v5.500h-6z" fill={c.title} stroke="#000" /></svg></button>
          <button aria-label="Đóng"><svg width="8" height="8" viewBox="0 0 8 8"><path d="M1 1l6 6M7 1L1 7" stroke="#000" strokeWidth="2" /></svg></button>
        </WindowButtons>
      </TitleBar>

      <Commands>
        <CommandRows>
          <Row as="nav">
            <Grip $gap={12} />
            {menus.map(([t, w]) => <MenuButton key={t} $w={w}>{t}</MenuButton>)}
            <Company>Đang làm việc trên: Sổ tài chính - Công ty Cổ phần ABC</Company>
          </Row>
          <Row>
            <Grip $gap={12} />
            {tools.map((t) => (
              <React.Fragment key={t.text}>
                <ToolButton $w={t.w} disabled={t.off}>
                  <ToolIcon name={t.icon} />{t.text}{t.caret && <Caret s={6} />}
                </ToolButton>
                {t.lineAfter && <Divider />}
                {t.gripAfter && <Grip $gap={7} />}
              </React.Fragment>
            ))}
          </Row>
        </CommandRows>
        <Account>
          <button aria-label="Trang chủ">
            <svg width="23" height="23" viewBox="0 0 23 23"><defs><radialGradient id="globe" cx=".35" cy=".3" r=".8"><stop offset="0" stopColor="#9adcff" /><stop offset=".5" stopColor="#2389e0" /><stop offset="1" stopColor="#0c4a9c" /></radialGradient></defs><circle cx="11.500" cy="11.500" r="11" fill="url(#globe)" /><path d="M4 5c4-3 7 0 6 3s-3 2-3 5-4-1-5-3zM14 11c4-2 7 0 6 4s-5 4-6 1 0-4 0-5z" fill="#7cc9fb" opacity=".7" /></svg>
          </button>
          <User>
            <svg width="24" height="24" viewBox="0 0 24 24"><circle cx="12" cy="12" r="11.500" fill="#b1b3b6" stroke="#eef0f3" /><circle cx="12" cy="9" r="4" fill="#fff" /><path d="M5 18c0-6 14-6 14 0-3 4-11 4-14 0z" fill="#fff" /></svg>
            A<Caret s={6} />
          </User>
        </Account>
      </Commands>

      <Work>
        <Side>
          <SideHead>
            <Heading as="h2">Thuế</Heading>
            <button aria-label="Thu gọn"><svg width="9" height="8" viewBox="0 0 9 8"><path d="M4 .5L1 4l3 3.500M8 .5L5 4l3 3.500" fill="none" stroke="#3f68a8" /></svg></button>
          </SideHead>
          <TaskList>
            {tasks.map((t, i) => (t === "-" ? <Separator key={i} /> : <TaskLink href="#" key={i}><NewDoc />{t}</TaskLink>))}
            <ScrollDown aria-label="Cuộn xuống"><Caret /></ScrollDown>
          </TaskList>
          <SideSplit />
          {modules.map(([icon, t]) => <Module key={t} href="#" $on={t === "Thuế"}><ModuleIcon name={icon} />{t}</Module>)}
          <Shortcuts>
            {["bee", "book", "slip", "chart", "coins", "agent", "scroll"].map((n) => <button key={n} aria-label={n}><ShortcutIcon name={n} /></button>)}
            <button aria-label="Thêm nút"><svg width="9" height="14" viewBox="0 0 9 14"><path d="M1 1l2.500 2.500L1 6M5 1l2.500 2.500L5 6" fill="none" stroke="#000" strokeWidth="1.400" /><path d="M1.500 10h6l-3 3z" /></svg></button>
          </Shortcuts>
        </Side>

        <Main>
          <GridPanel>
            <PanelHead>
              <Heading>Vật tư, hàng hóa, dịch vụ</Heading>
              <label htmlFor="group">Nhóm vật tư, hàng hóa, dịch vụ</label>
              <SelectBox><Select id="group" /><Caret /></SelectBox>
            </PanelHead>
            <GridArea>
              <GridColumn>
                <GridClip>
                  <Table>
                    <Cols />
                    <thead>
                      <tr>
                        {columns.map((k, i) => (
                          <HeadCell key={k.text}>
                            <div><span>{k.text}</span>{i === 1 && <svg width="10" height="8" viewBox="0 0 10 8"><path d="M1 7l3.500-6L8 7z" fill="none" stroke="#eef4fb" /></svg>}<PinIcon /></div>
                          </HeadCell>
                        ))}
                      </tr>
                    </thead>
                    <tbody>
                      <tr>
                        {columns.map((k, i) => (
                          <FilterCell key={k.text}>
                            <div>
                              <FilterOp aria-label={"Lọc " + k.text}>{k.op === "box" ? <OpBox /> : k.op}</FilterOp>
                              {i === 6
                                ? <Check type="checkbox" aria-label={k.text} $on />
                                : <input type="text" aria-label={k.text} placeholder={i === 0 ? "Tìm kiếm" : undefined} />}
                            </div>
                          </FilterCell>
                        ))}
                      </tr>
                      {rows.map((r, i) => (
                        <BodyRow key={i} $on={i === 0}>
                          <Cell>{r[0]}</Cell><Cell>{r[1]}</Cell><Cell>{r[2]}</Cell><Cell>{r[3]}</Cell>
                          <Cell $align="right">{r[4]}</Cell><Cell $align="right">{r[5]}</Cell>
                          <Cell><Check type="checkbox" aria-label={"Ngừng theo dõi " + r[0]} /></Cell>
                          <Cell>{r[6]}</Cell>
                        </BodyRow>
                      ))}
                    </tbody>
                  </Table>
                </GridClip>
                <SumRow>
                  <Table>
                    <Cols />
                    <tbody><tr>
                      <SumCell /><SumCell /><SumCell /><SumCell $edge />
                      <SumCell $on>30.004.941</SumCell><SumCell $on>98.554.320.068.33...</SumCell><SumCell /><SumCell $edge />
                    </tr></tbody>
                  </Table>
                </SumRow>
              </GridColumn>
              <Scroll>
                <ScrollArrow aria-label="Lên"><Caret up /></ScrollArrow>
                <Thumb />
                <ScrollArrow aria-label="Xuống"><Caret /></ScrollArrow>
              </Scroll>
            </GridArea>
          </GridPanel>
          <SplitHandle aria-label="Thu gọn chi tiết"><Caret fill="#fff" s={6} /></SplitHandle>
          <Details>
            <Tabs role="tablist">
              <Tab role="tab" $on $w={143}><u>1</u>. Thông tin ngầm định</Tab>
              <Tab role="tab" $w={130}><u>2</u>. Đơn vị chuyển đổi</Tab>
            </Tabs>
            <Fields>
              <FieldGroup items={leftFields} label={104} />
              <FieldGroup items={rightFields} label={128} />
            </Fields>
          </Details>
        </Main>
      </Work>

      <Status>
        <StatusCell $w={244}>
          <svg width="13" height="16" viewBox="0 0 13 16"><path d="M2 2l6-1.500L12 2v11l-5 2-5-1z" fill="#b9bfd8" stroke="#6c74a0" /><path d="M7 4v10" stroke="#6c74a0" /><circle cx="4.500" cy="11" r="4" fill="#47b04b" /><path d="M2.500 11l1.500 1.500L7 9.500" stroke="#fff" fill="none" strokeWidth="1.300" /></svg>
          Máy chủ: CCS-COM-15-026\MISASME2019
        </StatusCell>
        <StatusCell $w={226}>
          <svg width="13" height="16" viewBox="0 0 13 16"><path d="M1 3c0-3 11-3 11 0v10c0 3-11 3-11 0z" fill="#f7d355" stroke="#c49a20" /><path d="M1 6.500c2 1.500 9 1.500 11 0M1 10c2 1.500 9 1.500 11 0" fill="none" stroke="#fff3b8" /></svg>
          Tên DLKT: MISASME2019Sample_2020
        </StatusCell>
        <StatusCell $w={123}>
          <svg width="13" height="16" viewBox="0 0 13 16"><circle cx="7.500" cy="4.500" r="3.500" fill="#e9b87c" stroke="#3f3428" strokeWidth=".8" /><path d="M4 4c0-4 7-4 7 0-2 0-4-1-7 0z" fill="#2a2a30" /><path d="M1 14c0-7 11-7 11 0-3 2-8 2-11 0z" fill="#3f9fe0" stroke="#1d6db0" strokeWidth=".8" /></svg>
          Người dùng: ADMIN
        </StatusCell>
        <StatusCell $w={9} />
        <StatusCell />
        <StatusCell $w={182} $bold>Tổng đài tư vấn: MISA SUPPORT</StatusCell>
        <StatusCell $w={29}>OVR</StatusCell>
        <StatusCell $w={31}>NUM</StatusCell>
        <StatusCell $w={37} />
        <StatusCell $w={35} />
        <StatusCell $w={53}>10:36 SA</StatusCell>
        <StatusCell $w={62}>24/04/2020</StatusCell>
      </Status>

      <TaskBar>
        {["start", "ie", "media", "explorer"].map((n) => <Pinned key={n} aria-label={n}><AppIcon name={n} /></Pinned>)}
        {["bird", "chrome", "firefox", "skype", "notes", "pinwheel", "red", "green", "snip", "paint"].map((n) => (
          <Running key={n} aria-label={n} $on={n === "pinwheel"}>
            {n === "pinwheel" ? <Pinwheel s={32} /> : n === "skype" ? <Stack><AppIcon name={n} /><Badge>5</Badge></Stack> : <AppIcon name={n} />}
          </Running>
        ))}
        <Tray>
          <Language>EN</Language>
          <Caret up fill="#fff" />
          <svg width="16" height="16" viewBox="0 0 16 16"><path d="M2 1v14" stroke="#fff" strokeWidth="1.500" /><path d="M3 2h6v6H3zM9 4h5l-2 3 1 2H8z" fill="#fff" /></svg>
          <svg width="16" height="16" viewBox="0 0 16 16"><path d="M5 4.500h10v7H5zM10 12v2.500M7 14.500h6M1 1v3h3V1M2.500 4v9H5" fill="none" stroke="#fff" /></svg>
          <svg width="16" height="16" viewBox="0 0 16 16"><path d="M1 5.500h3l4-4v13l-4-4H1z" fill="#fff" /><path d="M10 5c1.500 2 1.500 4 0 6M12 3c3 3 3 7 0 10" fill="none" stroke="#fff" /></svg>
          <Clock>10:36 AM<br />24/04/20</Clock>
        </Tray>
        <ShowDesktop aria-label="Hiện màn hình" />
      </TaskBar>

      <Menu role="menu">
        {menuItems.map(([t, on]) => (
          <MenuItem key={t} role="menuitemcheckbox" aria-checked={on}>
            <Tick $on={on}>{on && <svg width="8" height="8" viewBox="0 0 8 8"><path d="M.5 3.500l2.500 2.500 4.500-5" fill="none" stroke="#000" strokeWidth="1.600" /></svg>}</Tick>{t}
          </MenuItem>
        ))}
        <MenuLine />
        <MenuItem role="menuitem" $on><Tick />Sửa mẫu</MenuItem>
      </Menu>
    </Window>
  );
}
